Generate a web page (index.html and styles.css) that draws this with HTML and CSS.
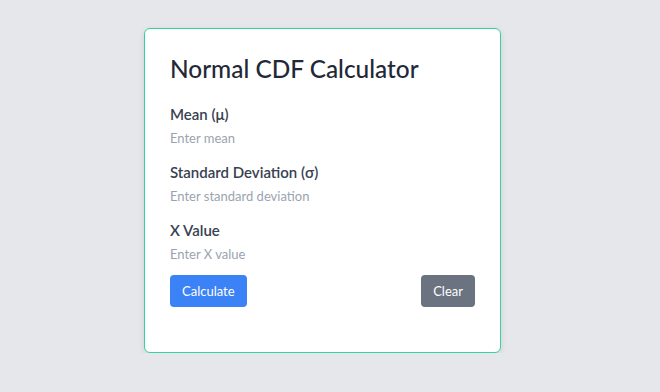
FILE: index.html
```html
<!DOCTYPE html>
<html lang="en">
<head>
    <meta charset="UTF-8">
    <meta name="viewport" content="width=device-width, initial-scale=1.0">
    <title>Normal CDF Calculator</title>
    <link rel="stylesheet" href="styles.css">
</head>
<body>
    <div class="page">
        <div class="card">
            <h1>Normal CDF Calculator</h1>

            <div class="field">
                <label for="mean">Mean (μ)</label>
                <input type="number" id="mean" placeholder="Enter mean">
            </div>

            <div class="field">
                <label for="sd">Standard Deviation (σ)</label>
                <input type="number" id="sd" placeholder="Enter standard deviation">
            </div>

            <div class="field">
                <label for="x">X Value</label>
                <input type="number" id="x" placeholder="Enter X value">
            </div>

            <div class="actions">
                <button class="btn btn-blue">Calculate</button>
                <button class="btn btn-gray">Clear</button>
            </div>

            <div class="result" id="result"></div>
        </div>
    </div>
</body>
</html>
```

FILE: styles.css
```css
body, html {
    margin: 0;
    padding: 0;
    font-family: 'Lato', 'Noto Sans', sans-serif;
    background-color: #E5E7EB;
}

.page {
    padding: 28px 0 0 144px;
}

/* Card */
.card {
    width: 357px;
    box-sizing: border-box;
    background-color: #fff;
    border: 1px solid #34D399;
    border-radius: 6px;
    padding: 24px 25px 25px;
    box-shadow: 0 2px 6px rgba(0,0,0,0.1);
}

h1 {
    margin: 0 0 19px;
    font-size: 24.4px;
    line-height: 32px;
    font-weight: 500;
    color: #1F2937;
}

.field + .field {
    margin-top: 14px;
}

.field label {
    display: block;
    font-size: 15px;
    line-height: 20px;
    font-weight: 600;
    color: #374151;
    margin-bottom: 4px;
}

.field input {
    display: block;
    width: 100%;
    box-sizing: border-box;
    border: none;
    outline: none;
    padding: 0;
    height: 20px;
    font-family: inherit;
    font-size: 13px;
    color: #374151;
    background: transparent;
}

.field input::placeholder {
    color: #9CA3AF;
}

.actions {
    display: flex;
    justify-content: space-between;
    margin-top: 11px;
}

.btn {
    border: none;
    border-radius: 4px;
    height: 32px;
    padding: 0 12px;
    font-family: inherit;
    font-size: 13px;
    color: #fff;
    cursor: pointer;
}

.btn-blue {
    background-color: #3B82F6;
}

.btn-gray {
    background-color: #6B7280;
}

.result {
    height: 20px;
}
```
